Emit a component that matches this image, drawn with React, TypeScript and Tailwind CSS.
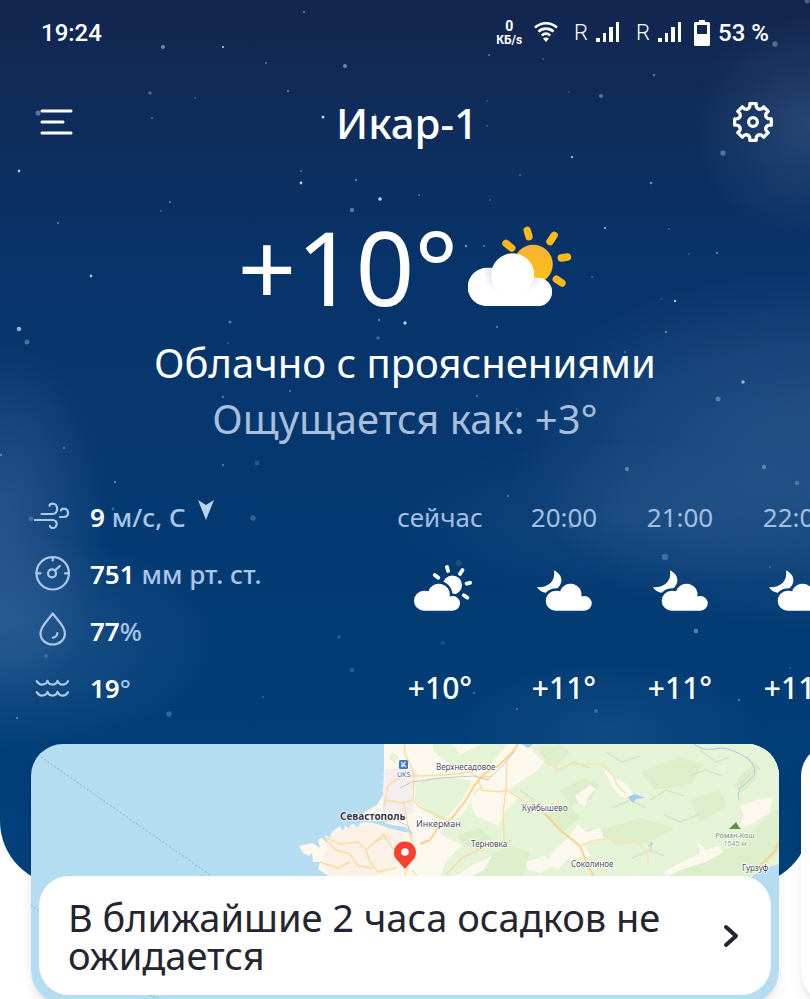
import React from 'react';

type Star = [x: number, y: number, r: number, opacity: number];

type Hour = {
  time: string;
  temp: string;
  icon: 'sun' | 'moon';
};

const stars: Star[] = [
  [304, 12, 1, 0.5], [163, 47, 2, 0.5], [223, 47, 1, 0.9], [266, 63, 1, 0.4],
  [345, 66, 2, 0.5], [150, 93, 1.5, 0.4], [195, 98, 1, 0.3], [288, 91, 1, 0.5],
  [38, 113, 2.5, 0.4], [152, 118, 1, 0.4], [323, 117, 1.5, 0.9], [375, 115, 1, 0.5],
  [489, 55, 1, 0.5], [543, 59, 1, 0.3], [654, 75, 1.3, 0.4], [601, 96, 2, 0.4],
  [569, 92, 1, 0.2], [487, 101, 1, 0.2], [487, 126, 1, 0.3], [775, 44, 2.7, 0.35],
  [807, 1, 2.5, 0.3], [723, 153, 2.7, 0.35], [572, 157, 1.2, 0.7], [19, 171, 1.4, 0.8],
  [58, 223, 1.2, 0.4], [170, 202, 1.1, 0.4], [161, 211, 1, 0.3], [301, 171, 1.2, 0.3],
  [301, 183, 1.4, 0.9], [356, 180, 1.2, 0.4], [380, 199, 1.8, 0.9], [352, 210, 2.2, 0.4],
  [91, 276, 1.4, 0.8], [19, 329, 2.3, 0.7], [27, 342, 2.5, 0.35], [230, 322, 1.6, 0.4],
  [379, 320, 1.2, 0.4], [405, 323, 1.7, 0.9], [378, 338, 1.7, 0.3], [228, 343, 1.2, 0.2],
  [290, 391, 1.2, 0.3], [223, 397, 1.2, 0.4], [64, 448, 1.2, 0.3], [1, 455, 1.2, 0.4],
  [223, 465, 1.2, 0.35], [257, 463, 2.2, 0.2], [520, 175, 1, 0.3], [651, 183, 1.3, 0.5],
  [419, 195, 1, 0.4], [490, 200, 1, 0.2], [605, 228, 1.2, 0.6], [669, 229, 1, 0.3],
  [466, 246, 1.2, 0.6], [484, 246, 1, 0.4], [717, 253, 1.2, 0.4], [689, 254, 1, 0.2],
  [592, 277, 1, 0.3], [675, 301, 1.2, 0.8], [661, 299, 1, 0.2], [497, 327, 1.2, 0.4],
  [666, 332, 1.2, 0.4], [625, 352, 1.2, 0.3], [743, 382, 1.7, 0.7], [718, 399, 2.5, 0.35],
  [477, 396, 1.3, 0.3], [517, 409, 1.5, 0.15], [627, 469, 2.2, 0.35], [764, 467, 2.2, 0.35],
  [797, 483, 2.3, 0.25], [508, 496, 1.2, 0.3], [31, 519, 2.3, 0.25], [253, 518, 2.7, 0.25],
  [113, 509, 1.4, 0.3], [115, 482, 1, 0.6], [571, 526, 2.2, 0.3], [665, 557, 3.3, 0.25],
  [459, 563, 3, 0.12], [443, 643, 2, 0.12], [696, 631, 2.3, 0.4], [770, 567, 1.2, 0.2],
  [46, 656, 2, 0.2], [169, 714, 2.7, 0.25], [263, 697, 1.2, 0.2], [17, 718, 1, 0.5],
  [339, 637, 1.8, 0.2], [352, 670, 2.2, 0.2], [474, 693, 1, 0.4], [517, 709, 1.2, 0.3],
  [596, 711, 2, 0.25], [739, 700, 1, 0.5], [790, 668, 1, 0.2],
];

const hours: Hour[] = [
  { time: 'сейчас', temp: '+10°', icon: 'sun' },
  { time: '20:00', temp: '+11°', icon: 'moon' },
  { time: '21:00', temp: '+11°', icon: 'moon' },
  { time: '22:00', temp: '+11°', icon: 'moon' },
];

function polar(radius: number, degrees: number) {
  const rad = (degrees * Math.PI) / 180;
  const x = 21 + radius * Math.sin(rad);
  const y = 21 - radius * Math.cos(rad);
  return `${x.toFixed(2)} ${y.toFixed(2)}`;
}

// eight square teeth with rounded valleys between them
const gearPath =
  [0, 45, 90, 135, 180, 225, 270, 315]
    .map(
      (a, i) =>
        `${i === 0 ? 'M' : 'L'}${polar(15.6, a - 12)} L${polar(18.6, a - 10)} ` +
        `L${polar(18.6, a + 10)} L${polar(15.6, a + 12)} Q${polar(12.8, a + 22.5)} ${polar(15.6, a + 33)}`
    )
    .join(' ') + 'Z';

const GearIcon = () => (
  <svg viewBox="0 0 42 42" className="w-[42px] h-[42px]" fill="none" stroke="white" strokeWidth="3.2" strokeLinejoin="round">
    <path d={gearPath} />
    <circle cx="21" cy="21" r="4.4" />
  </svg>
);

const SignalIcon = () => (
  <svg viewBox="0 0 24 22" className="w-6 h-[22px]" fill="white">
    <rect x="0" y="16" width="4" height="4" />
    <rect x="7" y="11" width="3" height="9" />
    <rect x="13" y="5" width="4" height="15" />
    <rect x="20" y="0" width="3" height="20" />
  </svg>
);

const WifiIcon = () => (
  <svg viewBox="0 0 24 22" className="w-6 h-[22px]" fill="none" stroke="white" strokeWidth="2.6">
    <path d="M1 5.6C7.4 -.2 16.6 -.2 23 5.6" />
    <path d="M4.4 9.6C8.9 5.6 15.1 5.6 19.6 9.6" />
    <path d="M7.8 13.4C10.4 11.2 13.6 11.2 16.2 13.4" />
    <path d="M12 20L9 16.4Q12 14.4 15 16.4Z" fill="white" stroke="none" />
  </svg>
);

const BatteryIcon = () => (
  <svg viewBox="0 0 16 26" className="w-4 h-[26px]">
    <path
      d="M5 0H11V2H14.5Q16 2 16 3.5V24.5Q16 26 14.5 26H1.5Q0 26 0 24.5V3.5Q0 2 1.5 2H5ZM3 5V14H13V5Z"
      fill="white"
      fillRule="evenodd"
    />
  </svg>
);

const CloudySunIcon = () => (
  <svg viewBox="0 0 104 81" className="w-[104px] h-[81px]">
    <defs>
      <linearGradient id="sun" x1="0" y1="0" x2="0" y2="1">
        <stop offset="0" stopColor="#f9b233" />
        <stop offset="1" stopColor="#fcc211" />
      </linearGradient>
      <radialGradient id="shade" cx="44.7" cy="48.8" r="29" gradientUnits="userSpaceOnUse">
        <stop offset="0.7" stopColor="#dcdbef" />
        <stop offset="1" stopColor="#ffffff" />
      </radialGradient>
      <linearGradient id="fade" x1="0" y1="48" x2="0" y2="68" gradientUnits="userSpaceOnUse">
        <stop offset="0" stopColor="#ffffff" stopOpacity="0" />
        <stop offset="1" stopColor="#ffffff" />
      </linearGradient>
    </defs>
    <g stroke="#fbb81b" strokeWidth="7.4" strokeLinecap="round">
      <path d="M38 17.3L43.7 22M59.2 4.3L61 10.8M86.2 9.3L82 15.6M99.5 31L93.3 32M88.3 53.2L94 57" />
    </g>
    <circle cx="65.3" cy="38.3" r="19.5" fill="url(#sun)" />
    <path d="M19 41.7H30L60 60L66 51.7H71A14.2 14.2 0 0 1 71 80H19A19.1 19.1 0 0 1 19 41.7Z" fill="url(#shade)" />
    <path d="M19 41.7H30L60 60L66 51.7H71A14.2 14.2 0 0 1 71 80H19A19.1 19.1 0 0 1 19 41.7Z" fill="url(#fade)" />
    <circle cx="44.7" cy="48.8" r="21.5" fill="white" />
  </svg>
);

const smallCloud =
  'M10 45.7A10 10 0 0 1 10 25.7Q12.3 25.6 14.5 26.2A11 11 0 0 1 35.8 31.4Q37 31 38.7 31A7.35 7.35 0 0 1 38.7 45.7Z';

const SmallSunIcon = () => (
  <svg viewBox="-6 0 65 46" className="w-[65px] h-[46px]">
    <mask id="sun-cut">
      <rect width="59" height="46" fill="white" />
      <path d={smallCloud} fill="black" stroke="black" strokeWidth="5" />
    </mask>
    <circle cx="38.4" cy="20" r="9.6" fill="white" mask="url(#sun-cut)" />
    <path
      d="M20.8 9.9L24.3 12.7M33 2L34 6M48.5 5L46 8.9M56 17.8L52.6 18.6M49.8 30.2L53.3 32.6"
      stroke="white"
      strokeWidth="3.8"
      strokeLinecap="round"
    />
    <path d={smallCloud} fill="white" />
  </svg>
);

const SmallMoonIcon = ({ id }: { id: string }) => (
  <svg viewBox="0 0 55 41" className="w-[55px] h-[41px]">
    <mask id={id}>
      <rect width="55" height="41" fill="white" />
      <path d={smallCloud} transform="translate(8.7 -5)" fill="black" stroke="black" strokeWidth="5" />
    </mask>
    <path
      d="M17 0.5C22 2.5 25 7 24.3 11.5C23 19 14 24 7.5 22.6C4 21.8 1.5 19.8 0 17.2C10 18 19 12 17 0.5Z"
      fill="white"
      mask={`url(#${id})`}
    />
    <path d={smallCloud} transform="translate(8.7 -5)" fill="white" />
  </svg>
);

const DetailIcon = ({ children }: { children: React.ReactNode }) => (
  <svg
    viewBox="0 -2 36 40"
    className="w-9 h-10 shrink-0"
    fill="none"
    stroke="#adc9ea"
    strokeWidth="2.2"
    strokeLinecap="round"
    strokeLinejoin="round"
  >
    {children}
  </svg>
);

const Sky = () => (
  <div className="absolute inset-0 bg-linear-to-b from-[#12264f] via-[#07346a] via-30% to-[#00417b]">
    <div className="absolute inset-0 bg-[radial-gradient(ellipse_120px_110px_at_100%_125px,#b4d2ff26,#b4d2ff12_50%,#b4d2ff00)]" />
    <div className="absolute inset-0 bg-[radial-gradient(ellipse_300px_180px_at_100%_450px,#b4d2ff26_20%,#b4d2ff16_60%,#b4d2ff00)]" />
    <div className="absolute inset-0 bg-[radial-gradient(ellipse_230px_80px_at_620px_520px,#b4d2ff12,#b4d2ff00)]" />
    <div className="absolute inset-0 bg-[radial-gradient(ellipse_110px_180px_at_0_520px,#b4d2ff2a_10%,#b4d2ff14_60%,#b4d2ff00)]" />
    <div className="absolute inset-0 bg-[radial-gradient(ellipse_220px_110px_at_0_640px,#b4d2ff20_20%,#b4d2ff10_60%,#b4d2ff00)]" />
    <div className="absolute inset-0 bg-[radial-gradient(ellipse_150px_70px_at_75%_730px,#b4d2ff14,#b4d2ff00)]" />
    <svg className="absolute inset-0 w-full h-full" fill="#cfe4ff">
      {stars.map(([x, y, r, opacity]) => (
        <circle key={`${x}-${y}`} cx={x} cy={y} r={r} opacity={opacity} />
      ))}
    </svg>
  </div>
);

const StatusBar = () => (
  <div className="flex items-center h-[66px] px-[41px] font-['Roboto',sans-serif] text-2xl font-medium">
    <span>19:24</span>
    <div className="ml-auto flex items-center">
      <div className="flex flex-col items-center mr-3 font-bold">
        <span className="text-[14px] leading-[14px]">0</span>
        <span className="text-[12px] leading-[14px]">КБ/s</span>
      </div>
      <WifiIcon />
      <span className="ml-4 mr-2 text-[22px] font-light">R</span>
      <SignalIcon />
      <span className="ml-4 mr-2 text-[22px] font-light">R</span>
      <SignalIcon />
      <span className="ml-3 mr-2">
        <BatteryIcon />
      </span>
      <span>53 %</span>
    </div>
  </div>
);

const Details = () => (
  <ul className="w-[356px] shrink-0 pl-[34px] text-[26px] font-semibold">
    <li className="flex items-center h-[57px] gap-5">
      <DetailIcon>
        <path d="M0.8 20H18.5C24.5 20 23.5 28 18.8 28Q16.5 28 16 26" />
        <path d="M7.5 14H18.5C25 14 24.5 3.7 18.5 3.7Q16 3.7 15.5 5.6" />
        <path d="M26 17H30C35.5 17 35.5 8.7 30 8.7Q27.5 8.7 27 10.4" />
      </DetailIcon>
      <span>
        9 <span className="font-medium text-[#a9c6ec]">м/с, С</span>
      </span>
      <svg viewBox="0 0 16 20" className="self-start w-4 h-5 mt-[11px] -ml-2" fill="#b9d2ee">
        <path d="M0 0L8 5L16 0L8 20Z" />
      </svg>
    </li>
    <li className="flex items-center h-[57px] gap-5">
      <DetailIcon>
        <circle cx="18.7" cy="16.3" r="16.2" />
        <circle cx="18" cy="16.3" r="4" />
        <path d="M21 13.4L25.8 9M2.5 16.3H6.5M31 16.3H34.8M18.7 0.2V3.6" />
      </DetailIcon>
      <span>
        751 <span className="font-medium text-[#a9c6ec]">мм рт. ст.</span>
      </span>
    </li>
    <li className="flex items-center h-[57px] gap-5">
      <DetailIcon>
        <path d="M18.7 -0.6C15.5 5 6.5 11.5 6.5 19.5C6.5 26 12 30.5 18.7 30.5C25.4 30.5 30.9 26 30.9 19.5C30.9 11.5 22 5 18.7 -0.6Z" />
        <path d="M23.4 19Q23 23 19 23.7" />
      </DetailIcon>
      <span>
        77<span className="font-medium text-[#a9c6ec]">%</span>
      </span>
    </li>
    <li className="flex items-center h-[57px] gap-5">
      <DetailIcon>
        <path d="M2.7 10.2Q5 13.6 8 13.6Q12.5 13.6 13.5 9.8Q14.5 13.6 18.5 13.6Q22.5 13.6 23.5 9.8Q25 13.6 28.7 13.6Q32 13.6 34 10.2" />
        <path d="M2.7 21.2Q5 24.6 8 24.6Q12.5 24.6 13.5 20.8Q14.5 24.6 18.5 24.6Q22.5 24.6 23.5 20.8Q25 24.6 28.7 24.6Q32 24.6 34 21.2" />
      </DetailIcon>
      <span>
        19<span className="font-medium text-[#a9c6ec]">°</span>
      </span>
    </li>
  </ul>
);

const Forecast = () => (
  <ul className="flex gap-8 pl-[34px]">
    {hours.map((hour) => (
      <li
        key={hour.time}
        className={`flex flex-col items-center shrink-0 ${hour.icon === 'sun' ? 'w-[100px]' : 'w-[84px]'}`}
      >
        <span className="text-[26px] leading-[56px] text-[#a3bfe4]">{hour.time}</span>
        <div className="flex items-end h-[46px] mt-5">
          {hour.icon === 'sun' ? (
            <SmallSunIcon />
          ) : (
            <SmallMoonIcon id={`moon-${hour.time}`} />
          )}
        </div>
        <span className="mt-12 text-[30px] leading-[58px] font-medium">{hour.temp}</span>
      </li>
    ))}
  </ul>
);

const MapView = () => (
  <svg
    viewBox="31 744 748 259"
    preserveAspectRatio="xMidYMid slice"
    className="absolute inset-0 w-full h-full"
    fontFamily="'Noto Sans', sans-serif"
  >
    <rect x="31" y="744" width="748" height="259" fill="#b4ddf2" />
    <path d="M41 757L213 877M31 905L39 911M150 995L165 1003" stroke="#84b0dc" strokeDasharray="2 2" fill="none" />

    {/* land */}
    <path
      d="M384 744L384 768L383 795L377 805L368 810L357 818L366 820L372 823L366 822L360 823L358 829L354 824L350 825L351 831L345 825L343 835L340 826L332 832L330 838L325 835L327 843L322 838L318 840L320 848L312 843L299 846L303 853L309 856L312 853L313 862L320 862L318 869L330 877L335 882H745L755 874L767 867L779 864V744Z"
      fill="#fdf8ee"
    />
    <path d="M385 769L412 768L420 775L412 792L414 812L400 818L382 812L384 790Z" fill="#f3eeec" />
    <path d="M330 838L345 828L380 824L405 834L403 850L390 870L370 877H330L322 864Z" fill="#fbf1e6" />
    <path d="M366 821L380 821L392 825L405 827L414 833L404 832L392 829L380 825Z" fill="#b4ddf2" />

    {/* forests */}
    <g fill="#e5f3d6">
      <path d="M432 744L452 744L460 754L470 750L480 744H508L503 750L490 764L478 770L455 768L440 757L434 752Z" />
      <path d="M416 784L428 778L450 777L472 781L468 790L460 803L448 815L440 821L424 808L415 800Z" />
      <path d="M522 744H779V864L767 867L750 877H440L446 862L455 852L462 845L446 838L440 832L452 822L462 815L472 800L474 790L484 785L470 800L475 815L490 822L498 826L506 810L518 798L508 790L523 780L536 772L546 760L540 752Z" />
      <path d="M392 752L399 757L395 764L389 758Z" />
    </g>
    <g fill="#d2e8bd" opacity="0.4">
      <path d="M530 748L560 744L570 752L556 768L545 764Z" />
      <path d="M560 790L582 778L600 784L590 800L570 806Z" />
      <path d="M456 836L480 828L492 838L470 850Z" />
      <path d="M600 830L640 818L676 828L650 842L616 846Z" />
      <path d="M545 812L570 806L580 818L562 832Z" />
      <path d="M640 772L680 757L704 764L690 784L655 790Z" />
      <path d="M744 772L758 764L756 780L742 792L734 786Z" />
      <path d="M690 800L720 790L728 806L700 822Z" />
      <path d="M668 877L706 856L736 846L779 808V852L750 877Z" />
      <path d="M480 860L510 846L530 852L522 877H472Z" />
    </g>
    <g stroke="#cfe0c0" strokeWidth="1.5" fill="none" opacity="0.7">
      <path d="M560 770L574 762L590 768M606 752L622 762L640 756M650 800L666 790L684 796M612 808L630 800L646 808" />
      <path d="M700 750L716 762L728 758M664 815L680 822L700 814M572 840L590 830L606 836M632 858L650 850L664 856" />
      <path d="M746 756L760 770M520 790L534 800L530 814M690 776L706 770L722 776M740 784L750 774" />
    </g>

    {/* clearings */}
    <g fill="#fdf8ee">
      <path d="M575 796L590 785L596 789L588 797L585 807L579 803Z" />
      <path d="M603 768L612 776L626 784L635 798L620 797L612 786Z" />
      <path d="M568 838L578 824L586 832L600 828L604 838L584 846L590 856L566 860L558 870L545 864L556 848Z" />
      <path d="M740 806L756 800L773 797L770 812L752 824L738 828L744 816Z" />
      <path d="M697 842L706 850L718 846L724 852L706 862L680 870L668 876L664 872L686 860L700 854Z" />
      <path d="M474 864L492 856L484 870L470 877H454Z" />
      <path d="M526 862L545 856L552 866L540 873L528 870Z" />
    </g>

    {/* rivers and lake */}
    <g fill="none" stroke="#9fcdea">
      <path d="M694 744Q702 751 714 749Q726 746 740 754Q756 762 755 774Q746 784 740 788Q737 794 739 800" />
      <path d="M651 842L651 850M648 846L653 843" />
    </g>
    <path d="M628 797L635 794L645 798L636 799L633 803Z" fill="#9cccf0" />
    <path d="M522 744H533L528 748Z" fill="#a5cdee" />

    {/* roads */}
    <g fill="none" strokeLinejoin="round">
      <path
        d="M404 744L405 754L412 768L414 776L398 778L388 786L384 806M414 776Q445 776 470 772L480 778L492 776M414 776L413 800L421 808L438 816L446 820M506 790L503 812L504 840L500 846M507 762L506 790L522 800L545 814M478 780L482 790L500 792L506 790M385 800L404 803L412 800M404 803L408 826L412 842M326 838L340 844L358 842L366 850L368 848L378 840L386 838M366 850L370 862L378 872L396 868M368 848L384 834L392 848L398 850M326 840L336 850L350 854L358 866L372 868M320 862L338 868L350 862M408 868L404 877M412 870L418 877M447 874L462 858L482 848L500 846L512 840"
        stroke="#f9dda0"
        strokeWidth="1.4"
      />
      <path
        d="M518 744L512 753L498 766L484 774L474 786L466 800L452 818L438 828L430 840L420 844M545 814L560 830L580 846L588 866L594 877M758 868L774 852L779 842"
        stroke="#fbd28a"
        strokeWidth="2"
      />
      <path
        d="M540 752L556 770L572 764L602 764L612 774L618 786L626 794M580 846L596 840L618 838L640 844L648 856L648 866"
        stroke="#f7e3b4"
        strokeWidth="1.4"
      />
      <path d="M400 788L412 782L440 778L474 776L488 780L504 764L514 752M380 822L396 820L408 826L412 836" stroke="#c7c9cf" />
    </g>

    <rect x="399" y="760" width="9" height="9" rx="1.5" fill="#3b78c9" />
    <path d="M401 762L406 767M402 767L405.5 761.5M401 765L403 767" stroke="white" strokeWidth="1.1" />
    <path d="M729 829L733 825L736 822L739 827L741 829Z" fill="#5c9440" />

    <g fill="#4c4d5c" stroke="#ffffff" strokeWidth="1.5" paintOrder="stroke" fontSize="8">
      <text x="397" y="777" fontSize="7" fill="#3f64a8">UKS</text>
      <text x="436" y="770">Верхнесадовое</text>
      <text x="340" y="820" fontSize="10" fontWeight="700" fill="#3a3a48">Севастополь</text>
      <text x="416" y="827" fontSize="9">Инкерман</text>
      <text x="522" y="811">Куйбышево</text>
      <text x="471" y="847">Терновка</text>
      <text x="571" y="867">Соколиное</text>
      <text x="735" y="838" textAnchor="middle" fontSize="7" fill="#6b8f55">Роман-Кош</text>
      <text x="735" y="846" textAnchor="middle" fontSize="7" fill="#7fa06b">1545 м</text>
      <text x="742" y="871">Гурзуф</text>
    </g>

    <path d="M405 869L397.5 860.5A11 11 0 1 1 412.5 860.5Z" fill="#f8402f" />
    <circle cx="405" cy="852" r="3.8" fill="white" />
  </svg>
);

export default function App() {
  return (
    <div className="relative h-screen overflow-hidden bg-white text-white font-['Noto_Sans',sans-serif]">
      <section className="relative overflow-hidden rounded-b-[64px] pb-[168px]">
        <Sky />
        <div className="relative">
          <StatusBar />

          <header className="flex items-center justify-between h-28 pl-10 pr-9">
            <button type="button" aria-label="Меню" className="w-[42px] h-[42px] flex items-center">
              <svg viewBox="0 0 33 26" className="w-[33px] h-[26px]" stroke="white" strokeWidth="3" strokeLinecap="round">
                <path d="M2 2H31M2 13H23M2 24H31" />
              </svg>
            </button>
            <h1 className="text-[42px] font-medium">Икар-1</h1>
            <button type="button" aria-label="Настройки">
              <GearIcon />
            </button>
          </header>

          <div className="flex items-center justify-center h-[120px] mt-7 gap-2.5">
            <span className="text-[103px] leading-[120px]">+10°</span>
            <CloudySunIcon />
          </div>
          <p className="mt-[9px] text-center text-[40px] leading-[56px]">Облачно с прояснениями</p>
          <p className="text-center text-[40px] leading-[56px] text-[#a8bedb]">Ощущается как: +3°</p>

          <div className="flex mt-[42px]">
            <Details />
            <Forecast />
          </div>
        </div>
      </section>

      <section className="relative flex gap-[22px] -mt-[141px] px-[31px]">
        <article className="relative w-full shrink-0 px-2 pb-2 pt-[132px] rounded-[32px] overflow-hidden shadow-lg">
          <MapView />
          <button
            type="button"
            className="relative flex items-center justify-between w-full h-[119px] pl-[29px] pr-8 rounded-[30px] bg-white text-left text-[38px] leading-[38px] text-[#25252f]"
          >
            <span className="max-w-[620px]">В ближайшие 2 часа осадков не ожидается</span>
            <svg viewBox="0 0 16 24" className="w-4 h-6 shrink-0" fill="none" stroke="#25252f" strokeWidth="4" strokeLinecap="round" strokeLinejoin="round">
              <path d="M3 3L13 12L3 21" />
            </svg>
          </button>
        </article>
        <article className="w-full shrink-0 rounded-[32px] bg-white shadow-lg" />
      </section>
    </div>
  );
}
